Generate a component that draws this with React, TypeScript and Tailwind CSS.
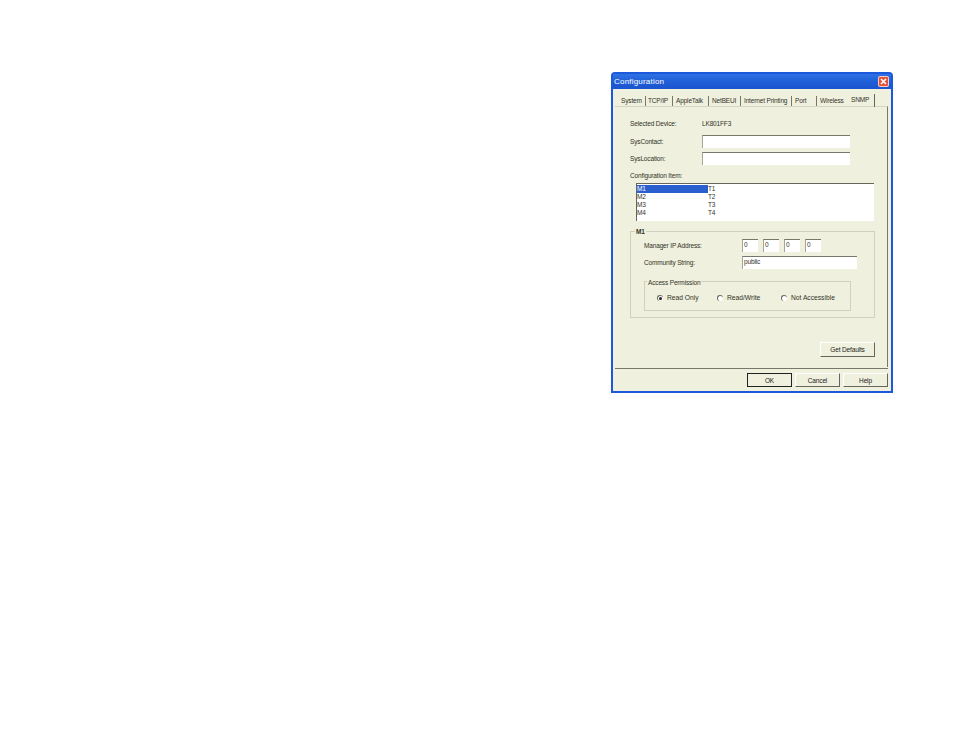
const font = "font-['Liberation_Sans',Arial,sans-serif]";

const tabs = [
  { label: "System", c: "w-[28px] pl-[3px]" },
  { label: "TCP/IP", c: "w-[27px] pl-[2px]" },
  { label: "AppleTalk", c: "w-[36px] pl-[3px]" },
  { label: "NetBEUI", c: "w-[32px] pl-[3px]" },
  { label: "Internet Printing", c: "w-[51px] pl-[3px]" },
  { label: "Port", c: "w-[25px] pl-[3px]" },
];

function Field({ className }: { className: string }) {
  return <div className={`bg-white border-t border-l border-t-[#77776a] border-l-[#a5a598] ${className}`} />;
}

function Radio({ checked, label, className }: { checked?: boolean; label: string; className: string }) {
  return (
    <div className={`flex items-center tracking-[0px] text-[6.7px] ${className}`}>
      <span className="w-[6px] h-[6px] rounded-full bg-white border-t border-l border-t-[#66665c] border-l-[#66665c] flex items-center justify-center mr-[4px]">
        {checked && <span className="w-[3px] h-[3px] rounded-full bg-[#222]" />}
      </span>
      <span>{label}</span>
    </div>
  );
}

function Button({ label, className }: { label: string; className: string }) {
  return (
    <div className={`flex items-center justify-center pt-[1px] bg-[#eff0de] text-[#222] border-r border-b border-r-[#66665c] border-b-[#66665c] border-t border-l border-t-white border-l-white ${className}`}>
      {label}
    </div>
  );
}

export default function App() {
  return (
    <div className={`w-[954px] h-[737px] bg-white pl-[611px] pt-[72px] ${font} text-[6.5px] tracking-[-0.15px] leading-[8px] text-[#333328]`}>
      <div className="w-[282px] h-[321px] bg-[#eff0de] border-2 border-[#1c58dc] rounded-t-[4px] flex flex-col">
        <div className="h-[15px] shrink-0 bg-gradient-to-b from-[#2f72e4] via-[#1f5fd8] to-[#1b54cf] flex items-center justify-between pl-[1px] pr-[2px]">
          <span className="text-white text-[8px] tracking-[0.2px]">Configuration</span>
          <span className="w-[11px] h-[11px] rounded-[2px] bg-[#e2543a] border border-white/70 flex items-center justify-center">
            <svg width="7" height="7" viewBox="0 0 7 7"><path d="M1 1L6 6M6 1L1 6" stroke="#fff" strokeWidth="1.6" /></svg>
          </span>
        </div>

        <div className="h-[11px] mt-[6px] ml-[5px] flex items-end shrink-0">
          {tabs.map((t) => (
            <div key={t.label} className={`${t.c} h-[10px] flex items-center border-r border-[#77776a] whitespace-nowrap`}>
              {t.label}
            </div>
          ))}
          <div className="w-[31px] pl-[3px] h-[10px] flex items-center whitespace-nowrap">Wireless</div>
          <div className="w-[27px] pl-[3px] h-[13px] mb-[-1px] flex items-start pt-[2px] border-r border-[#66665c] relative">SNMP</div>
        </div>

        <div className="ml-[2px] mr-[3px] h-[261px] border-t border-r border-r-[#77776a] border-t-[#d5d5c4] flex flex-col pl-[15px]">
          <div className="flex h-[8px] mt-[13px] items-center">
            <span className="w-[72px]">Selected Device:</span>
            <span>LK801FF3</span>
          </div>
          <div className="flex mt-[7px] h-[13px] items-center">
            <span className="w-[72px] pt-[1px]">SysContact:</span>
            <Field className="w-[148px] h-[13px]" />
          </div>
          <div className="flex mt-[4px] h-[13px] items-center">
            <span className="w-[72px]">SysLocation:</span>
            <Field className="w-[148px] h-[13px]" />
          </div>
          <div className="mt-[6px] h-[8px] pt-[1px]">Configuration Item:</div>

          <div className="mt-[4px] ml-[6px] w-[238px] h-[38px] bg-white border-t border-l border-t-[#66665c] border-l-[#66665c] pt-[1px]">
            <div className="flex h-[8px]">
              <div className="w-[71px] bg-[#2a5fd0] text-white">M1</div>
              <div>T1</div>
            </div>
            <div className="flex h-[8px]"><div className="w-[71px]">M2</div><div>T2</div></div>
            <div className="flex h-[8px]"><div className="w-[71px]">M3</div><div>T3</div></div>
            <div className="flex h-[8px]"><div className="w-[71px]">M4</div><div>T4</div></div>
          </div>

          <div className="relative mt-[10px] w-[245px] h-[87px] border border-[#cfd1bf] pl-[13px]">
            <span className="absolute left-[4px] top-[-4px] bg-[#eff0de] px-[1px] font-bold">M1</span>
            <div className="flex mt-[7px] h-[13px] items-center">
              <span className="w-[98px] pt-[1px]">Manager IP Address:</span>
              <div className="flex gap-[5px]">
                {["a", "b", "c", "d"].map((k) => (
                  <div key={k} className="w-[16px] h-[13px] bg-white border-t border-l border-t-[#77776a] border-l-[#a5a598] pl-[1px] pt-[1px]">0</div>
                ))}
              </div>
            </div>
            <div className="flex mt-[4px] h-[13px] items-center">
              <span className="w-[98px]">Community String:</span>
              <div className="w-[115px] h-[13px] bg-white border-t border-l border-t-[#77776a] border-l-[#a5a598] pl-[1px] pt-[1px]">public</div>
            </div>
            <div className="relative mt-[12px] w-[207px] h-[30px] border border-[#cfd1bf] flex items-center pt-[3px]">
              <span className="absolute left-[2px] top-[-3px] bg-[#eff0de] px-[1px]">Access Permission</span>
              <Radio checked label="Read Only" className="ml-[12px] w-[60px]" />
              <Radio label="Read/Write" className="w-[64px]" />
              <Radio label="Not Accessible" className="" />
            </div>
          </div>

          <div className="flex justify-end mt-[24px] w-[245px]">
            <Button label="Get Defaults" className="w-[55px] h-[15px]" />
          </div>
        </div>

        <div className="ml-[2px] mr-[3px] border-t border-[#77776a] mt-[1px]" />
        <div className="flex justify-end gap-[3px] mt-[4px] pr-[3px]">
          <div className="w-[45px] h-[14px] bg-[#eff0de] border border-[#222] flex items-center justify-center pt-[1px] text-[#222]">OK</div>
          <Button label="Cancel" className="w-[45px] h-[14px]" />
          <Button label="Help" className="w-[45px] h-[14px]" />
        </div>
      </div>
    </div>
  );
}
